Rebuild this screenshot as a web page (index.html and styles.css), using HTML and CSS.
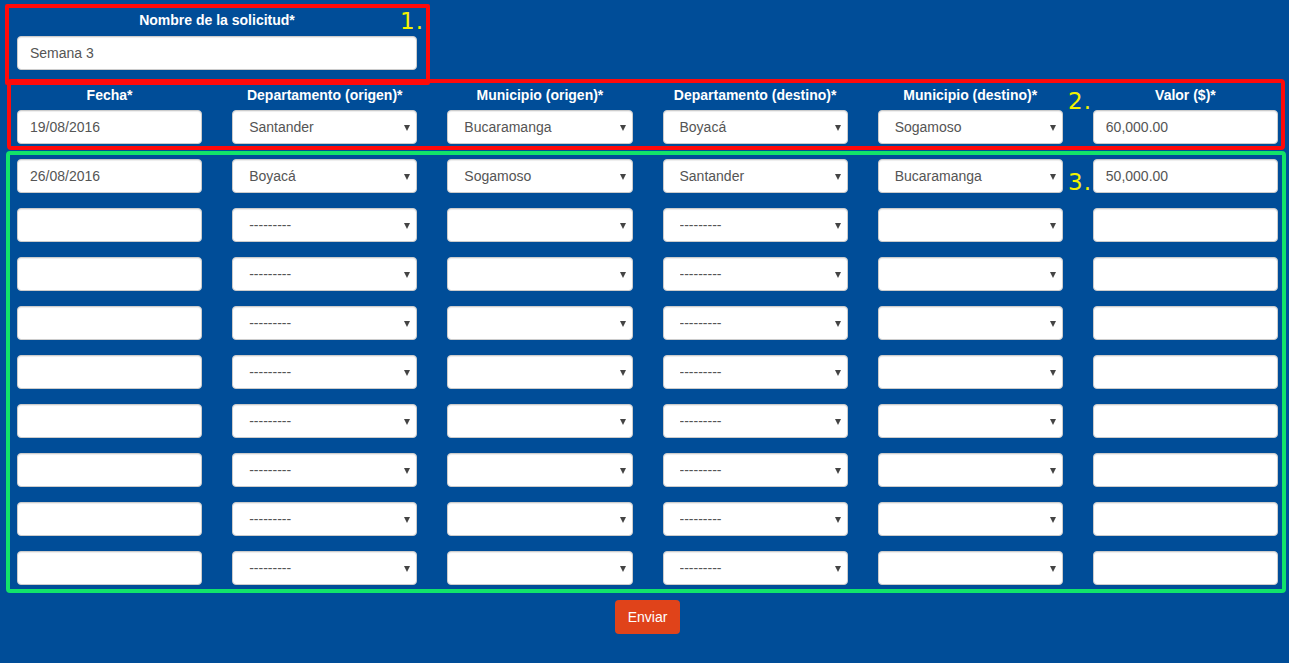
FILE: index.html
```html
<!DOCTYPE html>
<html lang="es">
<head>
<meta charset="utf-8">
<title>Solicitud</title>
<link rel="stylesheet" href="styles.css">
</head>
<body>
<div class="page">
  <div class="name-block">
    <label class="lbl">Nombre de la solicitud*</label>
    <input class="field wide" type="text" value="Semana 3">
  </div>

  <div class="grid">
    <div class="row head">
      <div class="lbl">Fecha*</div>
      <div class="lbl">Departamento (origen)*</div>
      <div class="lbl">Municipio (origen)*</div>
      <div class="lbl">Departamento (destino)*</div>
      <div class="lbl">Municipio (destino)*</div>
      <div class="lbl">Valor ($)*</div>
    </div>
    <div class="row">
      <input class="field" type="text" value="19/08/2016">
      <div class="sel"><select><option>Santander</option></select></div>
      <div class="sel"><select><option>Bucaramanga</option></select></div>
      <div class="sel"><select><option>Boyacá</option></select></div>
      <div class="sel"><select><option>Sogamoso</option></select></div>
      <input class="field" type="text" value="60,000.00">
    </div>
    <div class="row">
      <input class="field" type="text" value="26/08/2016">
      <div class="sel"><select><option>Boyacá</option></select></div>
      <div class="sel"><select><option>Sogamoso</option></select></div>
      <div class="sel"><select><option>Santander</option></select></div>
      <div class="sel"><select><option>Bucaramanga</option></select></div>
      <input class="field" type="text" value="50,000.00">
    </div>
    <div class="row"><input class="field" type="text"><div class="sel"><select><option>---------</option></select></div><div class="sel"><select><option></option></select></div><div class="sel"><select><option>---------</option></select></div><div class="sel"><select><option></option></select></div><input class="field" type="text"></div>
    <div class="row"><input class="field" type="text"><div class="sel"><select><option>---------</option></select></div><div class="sel"><select><option></option></select></div><div class="sel"><select><option>---------</option></select></div><div class="sel"><select><option></option></select></div><input class="field" type="text"></div>
    <div class="row"><input class="field" type="text"><div class="sel"><select><option>---------</option></select></div><div class="sel"><select><option></option></select></div><div class="sel"><select><option>---------</option></select></div><div class="sel"><select><option></option></select></div><input class="field" type="text"></div>
    <div class="row"><input class="field" type="text"><div class="sel"><select><option>---------</option></select></div><div class="sel"><select><option></option></select></div><div class="sel"><select><option>---------</option></select></div><div class="sel"><select><option></option></select></div><input class="field" type="text"></div>
    <div class="row"><input class="field" type="text"><div class="sel"><select><option>---------</option></select></div><div class="sel"><select><option></option></select></div><div class="sel"><select><option>---------</option></select></div><div class="sel"><select><option></option></select></div><input class="field" type="text"></div>
    <div class="row"><input class="field" type="text"><div class="sel"><select><option>---------</option></select></div><div class="sel"><select><option></option></select></div><div class="sel"><select><option>---------</option></select></div><div class="sel"><select><option></option></select></div><input class="field" type="text"></div>
    <div class="row"><input class="field" type="text"><div class="sel"><select><option>---------</option></select></div><div class="sel"><select><option></option></select></div><div class="sel"><select><option>---------</option></select></div><div class="sel"><select><option></option></select></div><input class="field" type="text"></div>
    <div class="row"><input class="field" type="text"><div class="sel"><select><option>---------</option></select></div><div class="sel"><select><option></option></select></div><div class="sel"><select><option>---------</option></select></div><div class="sel"><select><option></option></select></div><input class="field" type="text"></div>
  </div>

  <div class="actions"><button class="btn" type="button">Enviar</button></div>

  <div class="mark box1"></div>
  <div class="mark box2"></div>
  <div class="mark box3"></div>
  <span class="num n1">1.</span>
  <span class="num n2">2.</span>
  <span class="num n3">3.</span>
</div>
</body>
</html>
```

FILE: styles.css
```css
html, body {
  margin: 0;
  padding: 0;
  background: #004d98;
  height: 100%;
}
body {
  font-family: "Liberation Sans", Arial, sans-serif;
  font-size: 14px;
  color: #555;
}
.page {
  position: relative;
  padding: 10px 0 0 17px;
  height: 663px;
  box-sizing: border-box;
}
.lbl {
  display: block;
  color: #fff;
  font-weight: bold;
  font-size: 14px;
  line-height: 20px;
  text-align: center;
}
.name-block {
  width: 400px;
  display: flex;
  flex-direction: column;
  gap: 6px;
}
.field, .sel select {
  box-sizing: border-box;
  height: 34px;
  width: 100%;
  background: #fff;
  border: 1px solid #ccc;
  border-radius: 4px;
  box-shadow: inset 0 1px 1px rgba(0,0,0,.075);
  font-family: "Liberation Sans", Arial, sans-serif;
  font-size: 14px;
  color: #555;
  padding: 0 12px;
  margin: 0;
  outline: none;
  min-width: 0;
}
.field.wide { width: 400px; }
.grid {
  margin-top: 15px;
  display: flex;
  flex-direction: column;
  gap: 15px;
  width: 1261px;
}
.row {
  display: grid;
  grid-template-columns: repeat(6, 1fr);
  column-gap: 30px;
}
.row.head { margin-bottom: -10px; }
.sel {
  position: relative;
  height: 34px;
  min-width: 0;
}
.sel select {
  -webkit-appearance: none;
  appearance: none;
  padding: 0 24px 0 16px;
}
.sel::after {
  content: "";
  position: absolute;
  right: 7px;
  top: 15px;
  border-left: 3.5px solid transparent;
  border-right: 3.5px solid transparent;
  border-top: 6px solid #444;
  pointer-events: none;
}
.actions {
  width: 1261px;
  display: flex;
  justify-content: center;
  margin-top: 15px;
}
.btn {
  background: #e0431a;
  color: #fff;
  border: 0;
  border-radius: 4px;
  height: 34px;
  width: 65px;
  padding: 0;
  font-family: "Liberation Sans", Arial, sans-serif;
  font-size: 14px;
}
.mark {
  position: absolute;
  box-sizing: border-box;
  border-radius: 4px;
  pointer-events: none;
}
.box1 {
  left: 5px; top: 4px; width: 425px; height: 81px;
  border: 4px solid #ff0a0a;
  border-radius: 2px;
}
.box2 {
  left: 7px; top: 79px; width: 1278px; height: 71px;
  border: 4px solid #ff0a0a;
}
.box3 {
  left: 6px; top: 151px; width: 1280px; height: 442px;
  border: 4px solid #12e36a;
}
.num {
  position: absolute;
  font-family: "DejaVu Sans", sans-serif;
  font-size: 23px;
  line-height: 1;
  color: #f2f200;
  letter-spacing: 1px;
}
.n1 { left: 400px; top: 10px; }
.n2 { left: 1068px; top: 90px; }
.n3 { left: 1068px; top: 171px; }
```
